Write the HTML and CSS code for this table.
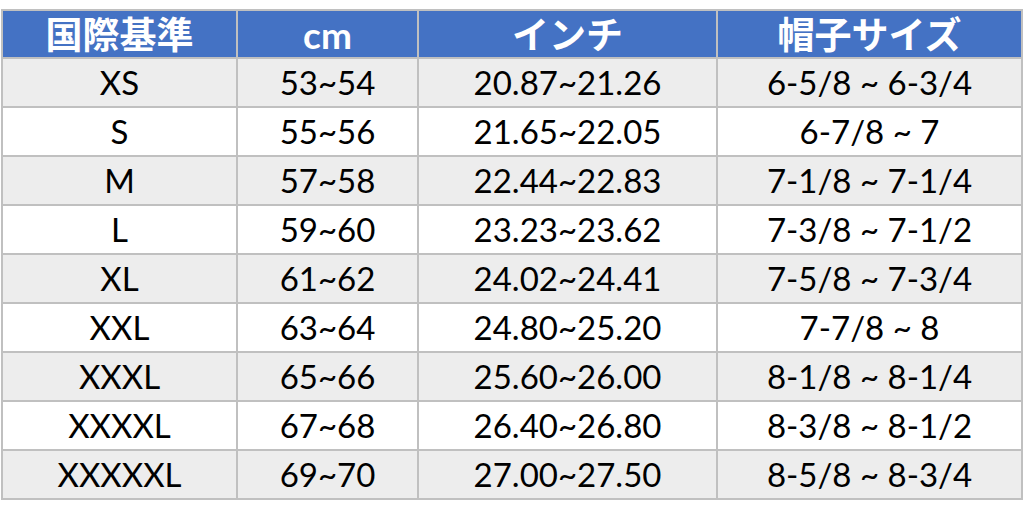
FILE: index.html
```html
<!DOCTYPE html>
<html lang="ja">
<head>
<meta charset="utf-8">
<title>サイズ表</title>
<link rel="stylesheet" href="styles.css">
</head>
<body>
<div class="wrap">
<table class="size-table">
<colgroup>
<col class="c1"><col class="c2"><col class="c3"><col class="c4">
</colgroup>
<thead>
<tr><th>国際基準</th><th>cm</th><th>インチ</th><th>帽子サイズ</th></tr>
</thead>
<tbody>
<tr><td>XS</td><td>53~54</td><td>20.87~21.26</td><td>6-5/8 ~ 6-3/4</td></tr>
<tr><td>S</td><td>55~56</td><td>21.65~22.05</td><td>6-7/8 ~ 7</td></tr>
<tr><td>M</td><td>57~58</td><td>22.44~22.83</td><td>7-1/8 ~ 7-1/4</td></tr>
<tr><td>L</td><td>59~60</td><td>23.23~23.62</td><td>7-3/8 ~ 7-1/2</td></tr>
<tr><td>XL</td><td>61~62</td><td>24.02~24.41</td><td>7-5/8 ~ 7-3/4</td></tr>
<tr><td>XXL</td><td>63~64</td><td>24.80~25.20</td><td>7-7/8 ~ 8</td></tr>
<tr><td>XXXL</td><td>65~66</td><td>25.60~26.00</td><td>8-1/8 ~ 8-1/4</td></tr>
<tr><td>XXXXL</td><td>67~68</td><td>26.40~26.80</td><td>8-3/8 ~ 8-1/2</td></tr>
<tr><td>XXXXXL</td><td>69~70</td><td>27.00~27.50</td><td>8-5/8 ~ 8-3/4</td></tr>
</tbody>
</table>
</div>
</body>
</html>
```
FILE: styles.css
```css
html, body {
  margin: 0;
  padding: 0;
  background: #ffffff;
}
.wrap {
  padding: 9px 1px 0 1px;
}
.size-table {
  border-collapse: collapse;
  table-layout: fixed;
  width: 1022px;
  font-family: "Lato", "Noto Sans CJK JP", sans-serif;
  color: #000;
}
.c1 { width: 235px; }
.c2 { width: 181px; }
.c3 { width: 299px; }
.c4 { width: 305px; }
.size-table th,
.size-table td {
  border: 2px solid #c0c0c0;
  text-align: center;
  padding: 0;
  line-height: 1;
}
.size-table th {
  background: #4472c4;
  color: #ffffff;
  font-weight: 700;
  font-size: 37px;
  height: 46px;
}
.size-table td {
  font-size: 33px;
  height: 47px;
}
.size-table tbody tr:nth-child(odd) td {
  background: #ededed;
}
.size-table tbody tr:nth-child(even) td {
  background: #ffffff;
}
```
